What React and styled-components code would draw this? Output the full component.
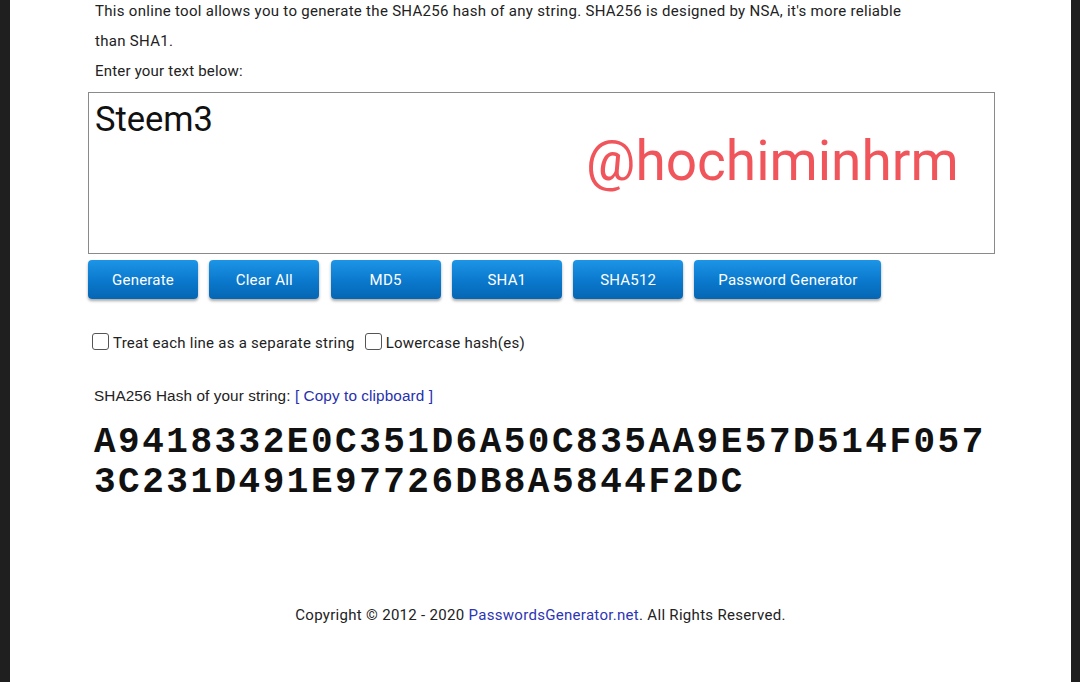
import styled, { createGlobalStyle } from 'styled-components'

const Global = createGlobalStyle`
  html, body {
    margin: 0;
    padding: 0;
    background: #1f1f1f;
  }
`

const Frame = styled.div`
  display: flex;
  height: 682px;
  overflow: hidden;
  background: #1f1f1f;
`

const Sheet = styled.main`
  margin-left: 10px;
  width: 1061px;
  height: 682px;
  background: #fff;
  color: #222;
  font-family: Roboto, 'Liberation Sans', sans-serif;
  display: flex;
  flex-direction: column;
`

const Content = styled.div`
  margin: -4px 0 0 78px;
  width: 907px;
`

const Intro = styled.p`
  margin: 0 0 0 7px;
  font-size: 15px;
  line-height: 30px;
  width: 820px;
  letter-spacing: 0.3px;
`

const Prompt = styled.p`
  margin: 0 0 0 7px;
  font-size: 15px;
  line-height: 30px;
  letter-spacing: 0.2px;
`

const InputBox = styled.div`
  position: relative;
  margin-top: 6px;
  height: 160px;
  border: 1px solid #8a8a8a;
  box-sizing: content-box;
`

const TextInput = styled.textarea`
  display: block;
  width: 100%;
  height: 100%;
  box-sizing: border-box;
  border: none;
  resize: none;
  outline: none;
  padding: 6px 6px;
  font-family: Roboto, 'Liberation Sans', sans-serif;
  font-size: 34.5px;
  line-height: 40px;
  color: #111;
  background: transparent;
`

const Watermark = styled.span`
  position: absolute;
  left: 497px;
  top: 36px;
  font-family: Roboto, 'Liberation Sans', sans-serif;
  font-size: 55px;
  color: #f0555b;
  pointer-events: none;
`

const ButtonRow = styled.div`
  display: flex;
  gap: 11.3px;
  margin-top: 6px;
`

const Button = styled.button`
  width: ${(p) => p.$w || 110}px;
  height: 39px;
  border: none;
  border-radius: 4px;
  background: linear-gradient(#1d95e6, #0a78cc 55%, #0566b3);
  box-shadow: 0 2px 3px rgba(0, 0, 0, 0.35);
  color: #fff;
  font-family: Roboto, 'Liberation Sans', sans-serif;
  font-size: 15px;
  letter-spacing: 0.2px;
  padding: 0;
`

const Options = styled.div`
  display: flex;
  align-items: center;
  gap: 10px;
  margin: 35px 0 0 4px;
  font-size: 15px;
  letter-spacing: 0.25px;
`

const Option = styled.label`
  display: flex;
  align-items: center;
  gap: 4px;
`

const Box = styled.span`
  width: 15px;
  height: 15px;
  border: 1.5px solid #555;
  border-radius: 3px;
  position: relative;
  top: -2px;
`

const ResultLabel = styled.div`
  margin: 35px 0 0 6px;
  font-family: 'Liberation Sans', Arial, sans-serif;
  font-size: 15.3px;
  letter-spacing: 0.1px;
  color: #222;
`

const CopyLink = styled.a`
  color: #2630b0;
  text-decoration: none;
`

const Hash = styled.div`
  margin: 18px 0 0 6px;
  width: 905px;
  font-family: 'Liberation Mono', 'Courier New', monospace;
  font-weight: bold;
  font-size: 36px;
  letter-spacing: 2.5px;
  line-height: 40px;
  word-break: break-all;
  color: #111;
`

const Footer = styled.footer`
  margin-top: auto;
  margin-bottom: 58px;
  text-align: center;
  font-size: 15px;
  color: #222;
  letter-spacing: 0.3px;
`

const FooterLink = styled.a`
  color: #2d35b5;
  text-decoration: none;
`

const Edge = styled.div`
  width: 9px;
  background: #1f1f1f;
`

export default function App() {
  return (
    <>
      <Global />
      <Frame>
        <Sheet>
          <Content>
            <Intro>
              This online tool allows you to generate the SHA256 hash of any string. SHA256 is designed by NSA, it's more reliable than SHA1.
            </Intro>
            <Prompt>Enter your text below:</Prompt>
            <InputBox>
              <TextInput defaultValue="Steem3" />
              <Watermark>@hochiminhrm</Watermark>
            </InputBox>
            <ButtonRow>
              <Button>Generate</Button>
              <Button>Clear All</Button>
              <Button>MD5</Button>
              <Button>SHA1</Button>
              <Button>SHA512</Button>
              <Button $w={187}>Password Generator</Button>
            </ButtonRow>
            <Options>
              <Option>
                <Box />
                Treat each line as a separate string
              </Option>
              <Option>
                <Box />
                Lowercase hash(es)
              </Option>
            </Options>
            <ResultLabel>
              SHA256 Hash of your string: <CopyLink href="#">[ Copy to clipboard ]</CopyLink>
            </ResultLabel>
            <Hash>A9418332E0C351D6A50C835AA9E57D514F0573C231D491E97726DB8A5844F2DC</Hash>
          </Content>
          <Footer>
            Copyright © 2012 - 2020 <FooterLink href="#">PasswordsGenerator.net</FooterLink>. All Rights Reserved.
          </Footer>
        </Sheet>
        <Edge />
      </Frame>
    </>
  )
}
